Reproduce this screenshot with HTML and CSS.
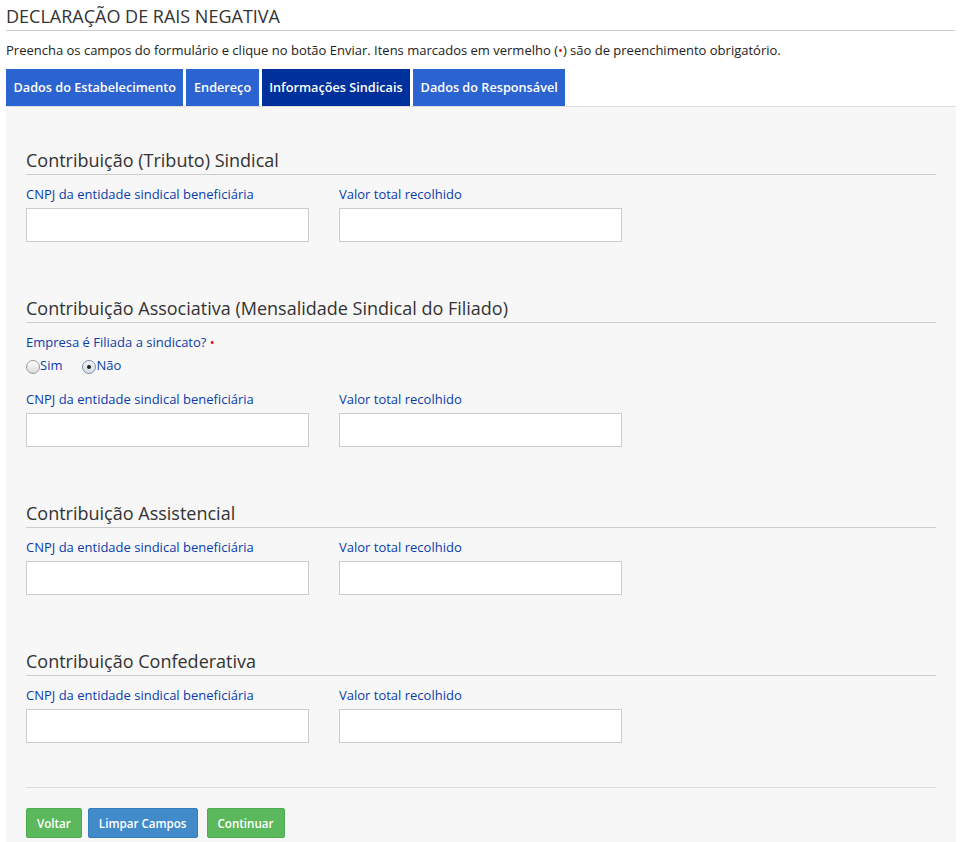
FILE: index.html
```html
<!DOCTYPE html>
<html lang="pt-BR">
<head>
<meta charset="utf-8">
<title>Declaração de RAIS Negativa</title>
<link rel="stylesheet" href="styles.css">
</head>
<body>
<div class="page">
  <h1 class="page-title">DECLARAÇÃO DE RAIS NEGATIVA</h1>
  <p class="intro">Preencha os campos do formulário e clique no botão Enviar. Itens marcados em vermelho (<span class="req">•</span>) são de preenchimento obrigatório.</p>
  <nav class="tabs">
    <a class="tab">Dados do Estabelecimento</a>
    <a class="tab">Endereço</a>
    <a class="tab active">Informações Sindicais</a>
    <a class="tab">Dados do Responsável</a>
  </nav>
  <div class="panel">
    <section class="section">
      <h3 class="section-title">Contribuição (Tributo) Sindical</h3>
      <div class="row">
        <div class="field"><label>CNPJ da entidade sindical beneficiária</label><input type="text" class="input"></div>
        <div class="field"><label>Valor total recolhido</label><input type="text" class="input"></div>
      </div>
    </section>
    <section class="section">
      <h3 class="section-title">Contribuição Associativa (Mensalidade Sindical do Filiado)</h3>
      <div class="question"><label>Empresa é Filiada a sindicato? <span class="req">•</span></label></div>
      <div class="radios">
        <label class="radio"><span class="dot"></span>Sim</label>
        <label class="radio"><span class="dot checked"></span>Não</label>
      </div>
      <div class="row">
        <div class="field"><label>CNPJ da entidade sindical beneficiária</label><input type="text" class="input"></div>
        <div class="field"><label>Valor total recolhido</label><input type="text" class="input"></div>
      </div>
    </section>
    <section class="section">
      <h3 class="section-title">Contribuição Assistencial</h3>
      <div class="row">
        <div class="field"><label>CNPJ da entidade sindical beneficiária</label><input type="text" class="input"></div>
        <div class="field"><label>Valor total recolhido</label><input type="text" class="input"></div>
      </div>
    </section>
    <section class="section">
      <h3 class="section-title">Contribuição Confederativa</h3>
      <div class="row">
        <div class="field"><label>CNPJ da entidade sindical beneficiária</label><input type="text" class="input"></div>
        <div class="field"><label>Valor total recolhido</label><input type="text" class="input"></div>
      </div>
    </section>
    <hr class="divider">
    <div class="actions">
      <button class="btn btn-green">Voltar</button>
      <button class="btn btn-blue">Limpar Campos</button>
      <button class="btn btn-green btn-gap">Continuar</button>
    </div>
  </div>
</div>
</body>
</html>
```
FILE: styles.css
```css
html, body {
  margin: 0;
  padding: 0;
  background: #fff;
}
body {
  font-family: "Open Sans", "DejaVu Sans", sans-serif;
  color: #333;
}
.page {
  margin-left: 6px;
  width: 950px;
}
.page-title {
  margin: 0;
  padding-top: 4px;
  font-size: 18px;
  font-weight: 400;
  line-height: 24px;
  color: #333;
  border-bottom: 1px solid #ccc;
  padding-bottom: 2px;
  width: 949px;
}
.intro {
  margin: 10px 0 0;
  font-size: 13px;
  line-height: 18px;
  color: #222;
}
.req {
  color: #e00;
}
.tabs {
  display: flex;
  gap: 3px;
  margin-top: 10px;
  border-bottom: 1px solid #ddd;
}
.tab {
  display: block;
  background: #2b63d1;
  color: #fff;
  font-size: 12.7px;
  font-weight: 600;
  line-height: 37px;
  padding: 0 7.5px;
  white-space: nowrap;
}
.tab.active {
  background: #00309b;
}
.panel {
  background: #f7f7f7;
  padding: 20px 20px 4px;
}
.section {
  margin-top: 21px;
}
.section + .section {
  margin-top: 54px;
}
.section-title {
  margin: 0;
  font-size: 18px;
  font-weight: 400;
  line-height: 24px;
  color: #333;
  padding-bottom: 2px;
  border-bottom: 1px solid #ccc;
}
.row {
  display: flex;
  gap: 30px;
  margin-top: 10px;
}
.field {
  display: flex;
  flex-direction: column;
  width: 283px;
}
.field label, .question label {
  font-size: 13px;
  line-height: 18px;
  color: #0a3caa;
  margin-bottom: 5px;
}
.input {
  box-sizing: border-box;
  width: 283px;
  height: 34px;
  border: 1px solid #ccc;
  background: #fff;
  margin: 0;
}
.question {
  margin-top: 10px;
  display: flex;
}
.question label {
  margin-bottom: 0;
}
.radios {
  display: flex;
  gap: 20px;
  margin-top: 5px;
  margin-bottom: 16px;
}
.radio {
  display: flex;
  align-items: center;
  font-size: 13px;
  line-height: 18px;
  color: #0a3caa;
}
.dot {
  box-sizing: border-box;
  display: inline-block;
  width: 14px;
  height: 14px;
  border-radius: 50%;
  border: 1px solid #9a9a9a;
  background: linear-gradient(#fdfdfd, #dcdcdc);
  margin-top: 4px;
  position: relative;
}
.dot.checked {
  border-color: #7d8fa8;
  background: linear-gradient(#f4f6fa, #d6dbe4);
}
.dot.checked::after {
  content: "";
  position: absolute;
  left: 4px;
  top: 4px;
  width: 4px;
  height: 4px;
  border-radius: 50%;
  background: #222;
}
.divider {
  border: 0;
  border-top: 1px solid #ddd;
  margin: 44px 0 20px;
}
.actions {
  display: flex;
  gap: 6px;
}
.btn {
  font-family: "Open Sans", "DejaVu Sans", sans-serif;
  font-size: 11.6px;
  font-weight: 600;
  color: #fff;
  height: 30px;
  padding: 0 10px;
  border-radius: 2px;
  cursor: pointer;
}
.btn-green {
  background: #5cb85c;
  border: 1px solid #4cae4c;
}
.btn-blue {
  background: #428bca;
  border: 1px solid #357ebd;
}
.btn-gap {
  margin-left: 3px;
}
```
